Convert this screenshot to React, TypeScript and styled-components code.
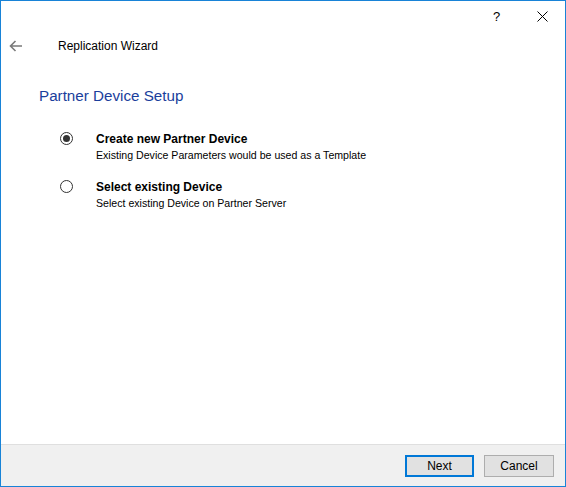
import React from "react";
import styled, { createGlobalStyle } from "styled-components";

const Global = createGlobalStyle`
  html, body { margin: 0; padding: 0; background: #ffffff; }
  * { box-sizing: border-box; }
`;

const Window = styled.div`
  width: 566px;
  height: 487px;
  border: 1px solid #1883d7;
  background: #ffffff;
  display: flex;
  flex-direction: column;
  font-family: "Liberation Sans", Arial, sans-serif;
  color: #000;
`;

const TitleBar = styled.div`
  height: 30px;
  display: flex;
  justify-content: flex-end;
  align-items: center;
`;

const CaptionButton = styled.div<{ $w: number }>`
  width: ${(p) => p.$w}px;
  height: 30px;
  display: flex;
  align-items: center;
  justify-content: center;
  font-size: 13px;
  color: #000;
`;

const Header = styled.div`
  height: 30px;
  display: flex;
  align-items: center;
  padding-left: 7px;
`;

const BackButton = styled.div`
  width: 16px;
  height: 16px;
  display: flex;
  align-items: center;
  justify-content: center;
  margin-right: 34px;
`;

const HeaderTitle = styled.div`
  font-size: 12px;
  color: #000;
`;

const Body = styled.div`
  flex: 1;
  padding: 25px 0 0 38px;
  display: flex;
  flex-direction: column;
`;

const PageTitle = styled.div`
  font-size: 15.2px;
  color: #1a3e9c;
  height: 20px;
  line-height: 20px;
  margin-bottom: 25px;
`;

const Options = styled.div`
  display: flex;
  flex-direction: column;
  gap: 16px;
  padding-left: 21px;
`;

const Option = styled.div`
  display: flex;
  align-items: flex-start;
`;

const RadioCircle = styled.div<{ $checked?: boolean }>`
  width: 13px;
  height: 13px;
  border-radius: 50%;
  border: 1px solid #333;
  background: #fff;
  margin-top: 1px;
  margin-right: 23px;
  display: flex;
  align-items: center;
  justify-content: center;
  &::after {
    content: "";
    display: ${(p) => (p.$checked ? "block" : "none")};
    width: 7px;
    height: 7px;
    border-radius: 50%;
    background: #333;
  }
`;

const OptionText = styled.div`
  display: flex;
  flex-direction: column;
  line-height: 16px;
`;

const OptionLabel = styled.div`
  font-weight: bold;
  font-size: 12px;
`;

const OptionHint = styled.div`
  font-size: 10.6px;
`;

const Footer = styled.div`
  height: 42px;
  background: #f0f0f0;
  border-top: 1px solid #dfdfdf;
  display: flex;
  justify-content: flex-end;
  align-items: center;
  gap: 10px;
  padding-right: 11px;
  padding-top: 1px;
`;

const Button = styled.button<{ $primary?: boolean }>`
  width: ${(p) => (p.$primary ? 69 : 70)}px;
  height: 22px;
  font-family: "Liberation Sans", Arial, sans-serif;
  font-size: 12px;
  color: #000;
  background: #e1e1e1;
  border: ${(p) => (p.$primary ? "2px solid #0078d7" : "1px solid #adadad")};
  padding: 0;
  display: flex;
  align-items: center;
  justify-content: center;
`;

export default function App() {
  return (
    <>
      <Global />
      <Window>
        <TitleBar>
          <CaptionButton $w={45}>?</CaptionButton>
          <CaptionButton $w={46}>
            <svg width="11" height="11" viewBox="0 0 11 11">
              <path d="M0.5 0.5 L10.5 10.5 M10.5 0.5 L0.5 10.5" stroke="#000" strokeWidth="1" />
            </svg>
          </CaptionButton>
        </TitleBar>
        <Header>
          <BackButton>
            <svg width="14" height="12" viewBox="0 0 14 12">
              <path d="M13 6 H2 M6.5 1 L1.5 6 L6.5 11" stroke="#7a7a7a" strokeWidth="1.6" fill="none" />
            </svg>
          </BackButton>
          <HeaderTitle>Replication Wizard</HeaderTitle>
        </Header>
        <Body>
          <PageTitle>Partner Device Setup</PageTitle>
          <Options>
            <Option>
              <RadioCircle $checked />
              <OptionText>
                <OptionLabel>Create new Partner Device</OptionLabel>
                <OptionHint>Existing Device Parameters would be used as a Template</OptionHint>
              </OptionText>
            </Option>
            <Option>
              <RadioCircle />
              <OptionText>
                <OptionLabel>Select existing Device</OptionLabel>
                <OptionHint>Select existing Device on Partner Server</OptionHint>
              </OptionText>
            </Option>
          </Options>
        </Body>
        <Footer>
          <Button $primary>Next</Button>
          <Button>Cancel</Button>
        </Footer>
      </Window>
    </>
  );
}
